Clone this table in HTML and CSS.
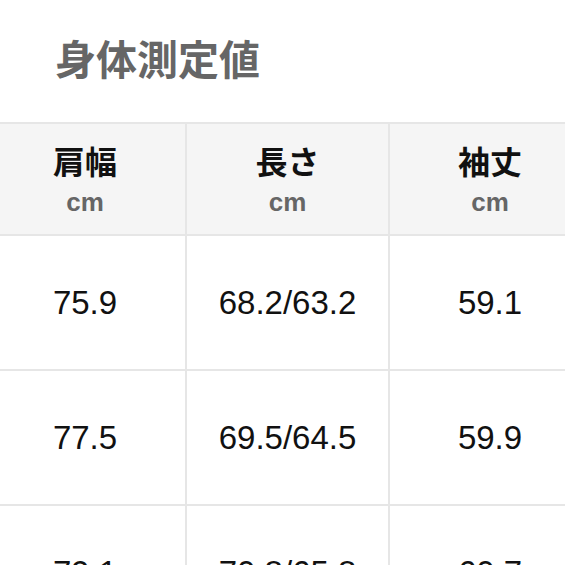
FILE: index.html
```html
<!DOCTYPE html>
<html lang="ja">
<head>
<meta charset="utf-8">
<title>身体測定値</title>
<link rel="stylesheet" href="styles.css">
</head>
<body>
<div class="page">
  <h1 class="title">身体測定値</h1>
  <div class="table">
    <div class="cell head"><span class="label">肩幅</span><span class="unit">cm</span></div>
    <div class="cell head"><span class="label">長さ</span><span class="unit">cm</span></div>
    <div class="cell head"><span class="label">袖丈</span><span class="unit">cm</span></div>

    <div class="cell">75.9</div>
    <div class="cell">68.2/63.2</div>
    <div class="cell">59.1</div>

    <div class="cell">77.5</div>
    <div class="cell">69.5/64.5</div>
    <div class="cell">59.9</div>

    <div class="cell">79.1</div>
    <div class="cell">70.8/65.8</div>
    <div class="cell">60.7</div>
  </div>
</div>
</body>
</html>
```

FILE: styles.css
```css
html, body {
  margin: 0;
  padding: 0;
  overflow: hidden;
  background: #ffffff;
}

.page {
  width: 565px;
  height: 565px;
  overflow: hidden;
}

.title {
  margin: 0;
  padding: 37px 0 0 55px;
  height: 122px;
  box-sizing: border-box;
  font-family: "Noto Sans CJK JP", sans-serif;
  font-weight: 700;
  font-size: 41px;
  line-height: 41px;
  color: #666666;
}

.table {
  margin-left: -15px;
  width: 605px;
  display: grid;
  grid-template-columns: 200px 201px 200px;
  grid-auto-rows: 133px;
  grid-template-rows: 110px;
  gap: 2px;
  padding-top: 2px;
  background: #e6e6e6;
}

.cell {
  background: #ffffff;
  display: flex;
  align-items: center;
  justify-content: center;
  font-family: "Liberation Sans", Arial, sans-serif;
  font-size: 33px;
  color: #111111;
}

.head {
  background: #f5f5f5;
  flex-direction: column;
}

.label {
  font-family: "Noto Sans CJK JP", sans-serif;
  font-weight: 700;
  font-size: 32px;
  line-height: 36px;
  color: #111111;
}

.unit {
  font-family: "Liberation Sans", Arial, sans-serif;
  font-weight: 700;
  font-size: 26px;
  line-height: 28px;
  color: #666666;
  margin-top: 10px;
}
```
